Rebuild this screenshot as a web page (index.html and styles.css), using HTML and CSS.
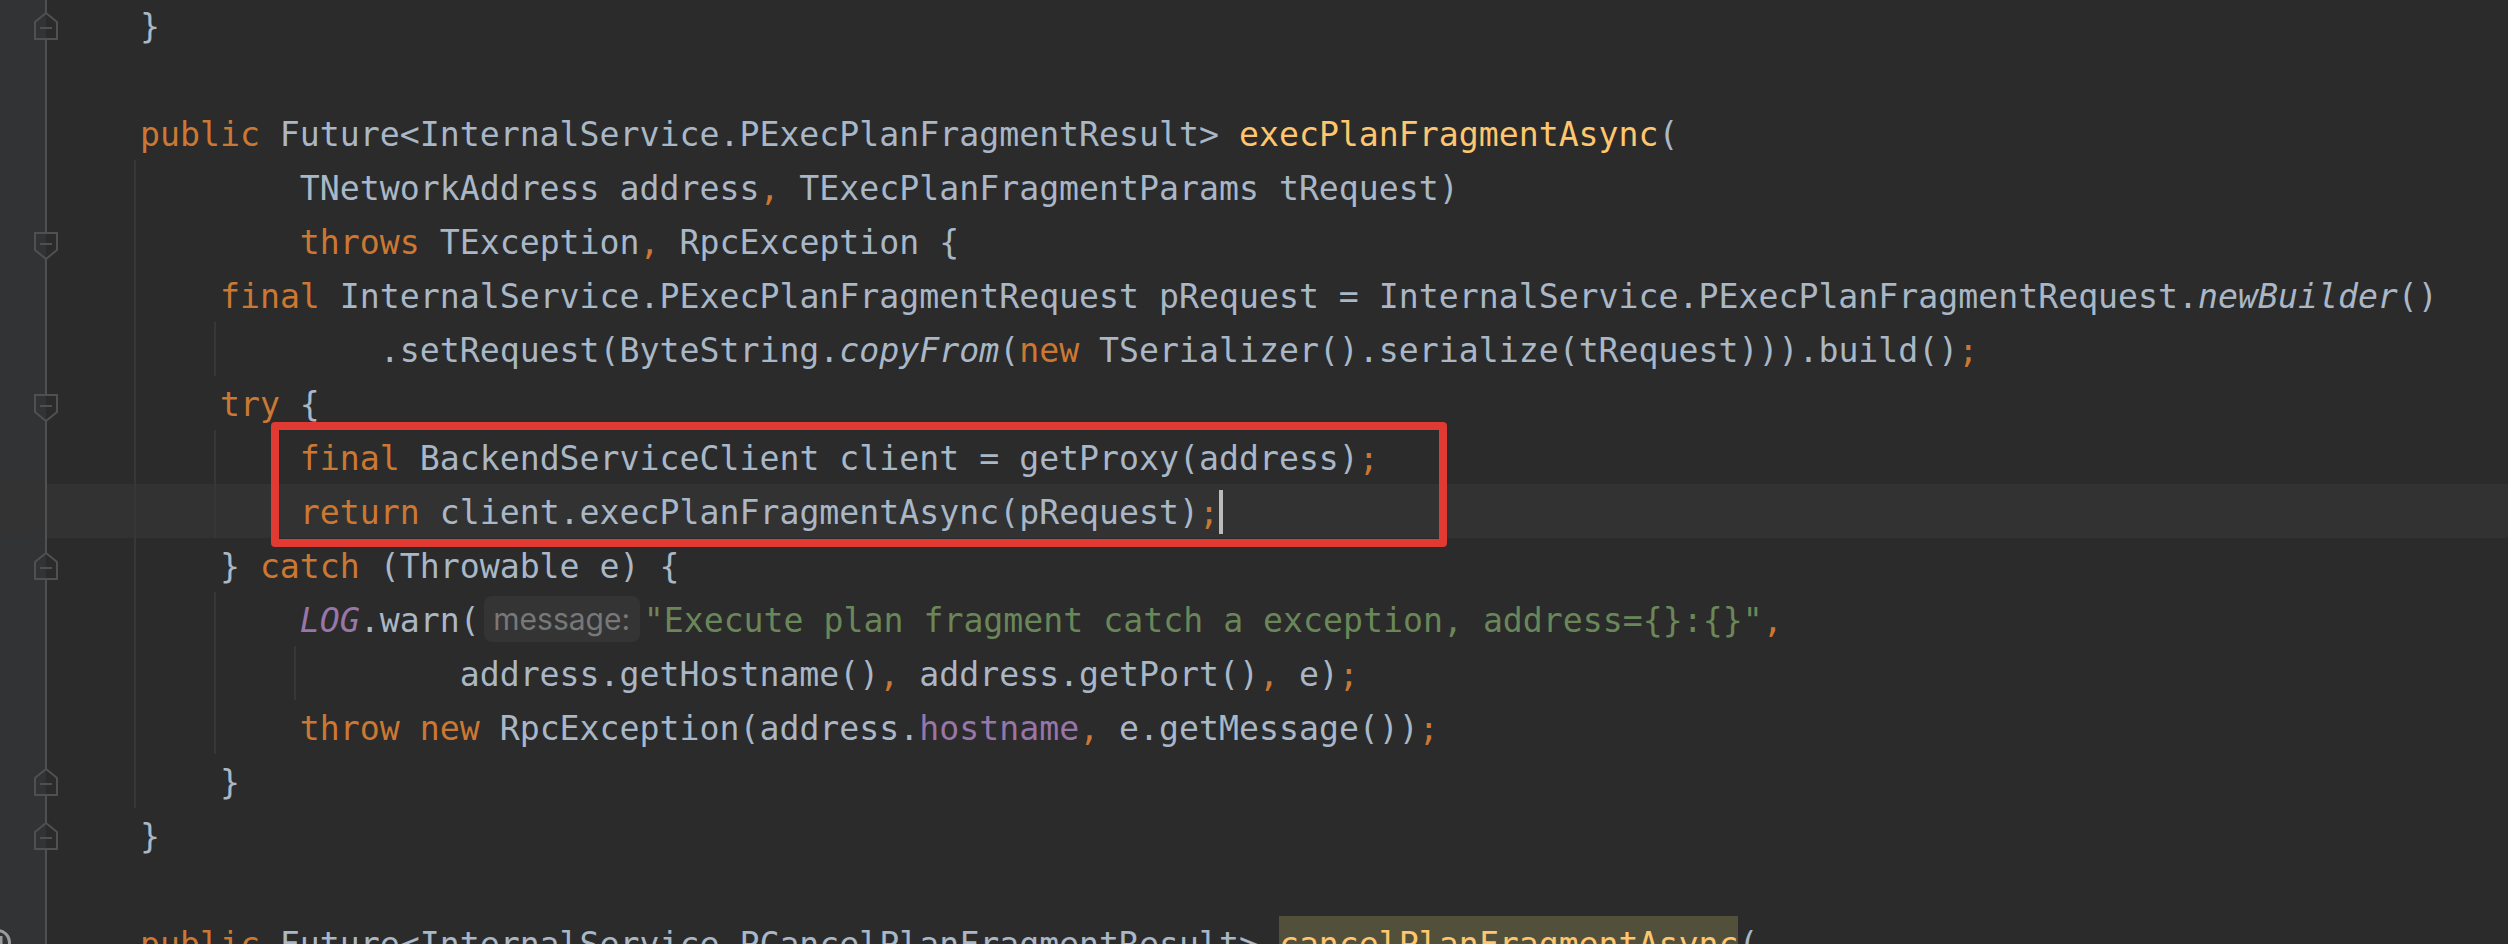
FILE: index.html
```html
<!DOCTYPE html>
<html lang="en">
<head>
<meta charset="utf-8">
<title>Editor</title>
<link rel="stylesheet" href="styles.css">
</head>
<body>
<main class="editor">
  <div class="line"><div class="gutter"><svg class="fold fold-end" viewBox="0 0 24 28"><path class="half-r" d="M12 1l11 9v17H12z"/><path class="half-l" d="M12 1L1 10v17h11z"/><path class="outline" d="M1 27V10L12 1l11 9v17z"/><path class="outline" d="M6 16h12"/></svg></div><div class="code"><pre>}</pre></div></div>
  <div class="line"><div class="gutter"></div><div class="code"><pre> </pre></div></div>
  <div class="line"><div class="gutter"></div><div class="code"><pre><b>public</b> Future&lt;InternalService.PExecPlanFragmentResult&gt; <i>execPlanFragmentAsync</i>(</pre></div></div>
  <div class="line"><div class="gutter"></div><div class="code g1"><pre>        TNetworkAddress address<b>,</b> TExecPlanFragmentParams tRequest)</pre></div></div>
  <div class="line"><div class="gutter"><svg class="fold fold-start" viewBox="0 0 24 28"><path class="half-r" d="M12 1h11v17l-11 9z"/><path class="half-l" d="M12 1H1v17l11 9z"/><path class="outline" d="M1 1v17l11 9 11-9V1z"/><path class="outline" d="M6 12h12"/></svg></div><div class="code g1"><pre>        <b>throws</b> TException<b>,</b> RpcException {</pre></div></div>
  <div class="line"><div class="gutter"></div><div class="code g1"><pre>    <b>final</b> InternalService.PExecPlanFragmentRequest pRequest = InternalService.PExecPlanFragmentRequest.<em>newBuilder</em>()</pre></div></div>
  <div class="line"><div class="gutter"></div><div class="code g2"><pre>            .setRequest(ByteString.<em>copyFrom</em>(<b>new</b> TSerializer().serialize(tRequest))).build()<b>;</b></pre></div></div>
  <div class="line"><div class="gutter"><svg class="fold fold-start" viewBox="0 0 24 28"><path class="half-r" d="M12 1h11v17l-11 9z"/><path class="half-l" d="M12 1H1v17l11 9z"/><path class="outline" d="M1 1v17l11 9 11-9V1z"/><path class="outline" d="M6 12h12"/></svg></div><div class="code g1"><pre>    <b>try</b> {</pre></div></div>
  <div class="line"><div class="gutter"></div><div class="code g2"><pre>        <b>final</b> BackendServiceClient client = getProxy(address)<b>;</b></pre></div></div>
  <div class="line current"><div class="gutter"></div><div class="code g2"><pre>        <b>return</b> client.execPlanFragmentAsync(pRequest)<b>;</b><span class="caret"></span></pre></div></div>
  <div class="line"><div class="gutter"><svg class="fold fold-end" viewBox="0 0 24 28"><path class="half-r" d="M12 1l11 9v17H12z"/><path class="half-l" d="M12 1L1 10v17h11z"/><path class="outline" d="M1 27V10L12 1l11 9v17z"/><path class="outline" d="M6 16h12"/></svg></div><div class="code g1"><pre>    } <b>catch</b> (Throwable e) {</pre></div></div>
  <div class="line"><div class="gutter"></div><div class="code g2"><pre>        <em class="field">LOG</em>.warn(<span class="hint">message:</span><s>"Execute plan fragment catch a exception, address={}:{}"</s><b>,</b></pre></div></div>
  <div class="line"><div class="gutter"></div><div class="code g3"><pre>                address.getHostname()<b>,</b> address.getPort()<b>,</b> e)<b>;</b></pre></div></div>
  <div class="line"><div class="gutter"></div><div class="code g2"><pre>        <b>throw new</b> RpcException(address.<u>hostname</u><b>,</b> e.getMessage())<b>;</b></pre></div></div>
  <div class="line"><div class="gutter"><svg class="fold fold-end" viewBox="0 0 24 28"><path class="half-r" d="M12 1l11 9v17H12z"/><path class="half-l" d="M12 1L1 10v17h11z"/><path class="outline" d="M1 27V10L12 1l11 9v17z"/><path class="outline" d="M6 16h12"/></svg></div><div class="code g1"><pre>    }</pre></div></div>
  <div class="line"><div class="gutter"><svg class="fold fold-end" viewBox="0 0 24 28"><path class="half-r" d="M12 1l11 9v17H12z"/><path class="half-l" d="M12 1L1 10v17h11z"/><path class="outline" d="M1 27V10L12 1l11 9v17z"/><path class="outline" d="M6 16h12"/></svg></div><div class="code"><pre>}</pre></div></div>
  <div class="line"><div class="gutter"></div><div class="code"><pre> </pre></div></div>
  <div class="line"><div class="gutter"><svg class="impl" viewBox="0 0 24 28"><circle cx="-2.5" cy="14.5" r="12"/><path d="M1 8v20"/></svg></div><div class="code"><pre><b>public</b> Future&lt;InternalService.PCancelPlanFragmentResult&gt; <i class="usage">cancelPlanFragmentAsync</i>(</pre></div></div>
  <div class="annotation"></div>
</main>
</body>
</html>
```

FILE: styles.css
```css
html, body {
  margin: 0;
  padding: 0;
  height: 944px;
  overflow: hidden;
  background: #2b2b2b;
}

.editor {
  position: relative;
  height: 946px;
  overflow: hidden;
  margin-top: -2px;
  font-family: "DejaVu Sans Mono", "Liberation Mono", monospace;
  font-size: 33.2px;
  color: #a9b7c6;
}

.line {
  display: flex;
  height: 54px;
}

.gutter {
  position: relative;
  flex: 0 0 45px;
  background: #313335;
  border-right: 2px solid #4e5052;
}

.current .gutter {
  background: #333333;
}

.code {
  flex: 1;
  padding-left: 93px;
  background-repeat: no-repeat;
}

.current .code {
  background-color: #323232;
}

.g1 {
  background-image: linear-gradient(#373737, #373737);
  background-size: 2px 100%;
  background-position: 87px 0;
}

.g2 {
  background-image: linear-gradient(#373737, #373737), linear-gradient(#373737, #373737);
  background-size: 2px 100%, 2px 100%;
  background-position: 87px 0, 167px 0;
}

.g3 {
  background-image: linear-gradient(#373737, #373737), linear-gradient(#373737, #373737), linear-gradient(#373737, #373737);
  background-size: 2px 100%, 2px 100%, 2px 100%;
  background-position: 87px 0, 167px 0, 247px 0;
}

pre {
  margin: 0;
  font: inherit;
  line-height: 54px;
  height: 54px;
  white-space: pre;
  position: relative;
  top: 2px;
}

b {
  font-weight: 400;
  color: #cc7832;
}

i {
  font-style: normal;
  color: #ffc66d;
}

em {
  font-style: italic;
}

.field {
  color: #9876aa;
}

u {
  text-decoration: none;
  color: #9876aa;
}

s {
  text-decoration: none;
  color: #6a8759;
}

.usage {
  display: inline-block;
  background: #52503a;
  height: 54px;
  position: relative;
  top: -2px;
  line-height: 58px;
  vertical-align: top;
}

.hint {
  display: inline-block;
  width: 156px;
  height: 46px;
  margin: 2px 4px 0;
  border-radius: 8px;
  background: #343434;
  color: #787878;
  font-family: Inter, "Liberation Sans", sans-serif;
  font-size: 30px;
  line-height: 46px;
  text-align: center;
  vertical-align: top;
}

.caret {
  display: inline-block;
  width: 4px;
  height: 44px;
  background: #bbbbbb;
  vertical-align: top;
  margin-top: 4px;
}

.fold {
  position: absolute;
  left: 34px;
  width: 24px;
  height: 28px;
}

.fold-end {
  top: 14px;
}

.fold-start {
  top: 18px;
}

.half-l {
  fill: #313335;
}

.half-r {
  fill: #2b2b2b;
}

.outline {
  fill: none;
  stroke: #4e5052;
  stroke-width: 2;
}

.impl {
  position: absolute;
  left: 0;
  top: 12px;
  width: 24px;
  height: 28px;
  fill: none;
  stroke: #9a9c9e;
  stroke-width: 3;
}

.annotation {
  position: absolute;
  left: 271px;
  top: 424px;
  width: 1176px;
  height: 125px;
  box-sizing: border-box;
  border: 8px solid #e03a32;
  border-radius: 4px;
}
```
